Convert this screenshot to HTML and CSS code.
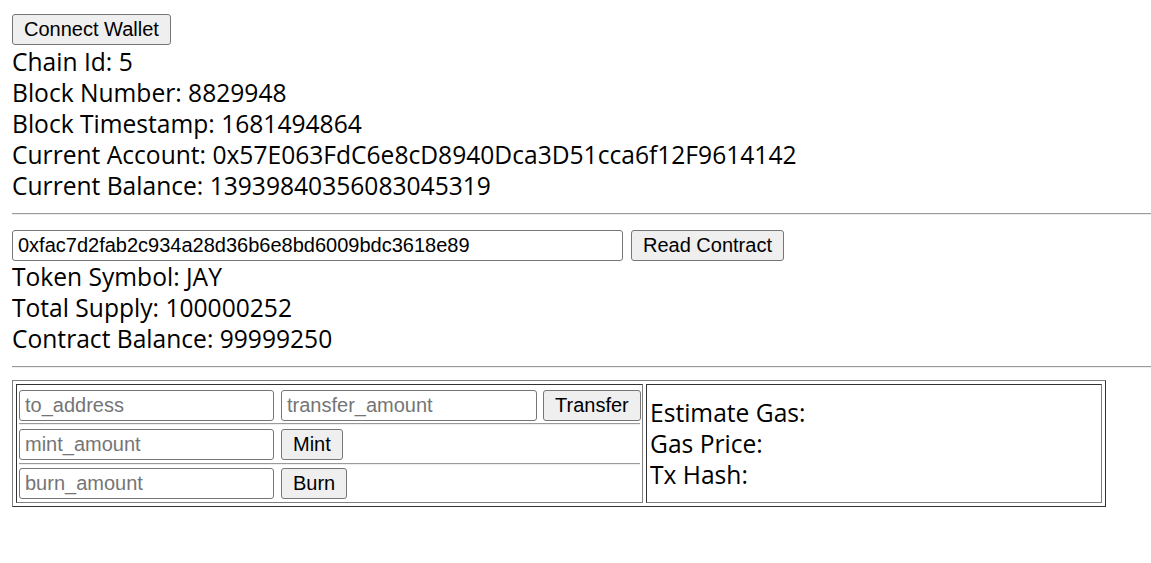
FILE: index.html
```html
<!DOCTYPE html>
<html lang="en">
<head>
<meta charset="utf-8">
<title>Wallet</title>
<link rel="stylesheet" href="styles.css">
</head>
<body>
  <div class="wallet">
    <button class="btn">Connect Wallet</button>
  </div>
  <div class="line">Chain Id: 5</div>
  <div class="line">Block Number: 8829948</div>
  <div class="line">Block Timestamp: 1681494864</div>
  <div class="line">Current Account: 0x57E063FdC6e8cD8940Dca3D51cca6f12F9614142</div>
  <div class="line">Current Balance: 13939840356083045319</div>
  <hr class="rule">
  <div class="contract-row">
    <input class="field field-address" type="text" value="0xfac7d2fab2c934a28d36b6e8bd6009bdc3618e89">
    <button class="btn">Read Contract</button>
  </div>
  <div class="line">Token Symbol: JAY</div>
  <div class="line">Total Supply: 100000252</div>
  <div class="line">Contract Balance: 99999250</div>
  <hr class="rule">
  <table class="actions">
    <tr>
      <td class="cell cell-forms">
        <div class="form-row first">
          <input class="field field-a" type="text" placeholder="to_address">
          <input class="field field-b" type="text" placeholder="transfer_amount">
          <button class="btn">Transfer</button>
        </div>
        <div class="sep"></div>
        <div class="form-row">
          <input class="field field-a" type="text" placeholder="mint_amount">
          <button class="btn">Mint</button>
        </div>
        <div class="sep sep-2"></div>
        <div class="form-row last">
          <input class="field field-a" type="text" placeholder="burn_amount">
          <button class="btn">Burn</button>
        </div>
      </td>
      <td class="cell cell-info">
        <div class="line">Estimate Gas:</div>
        <div class="line">Gas Price:</div>
        <div class="line">Tx Hash:</div>
      </td>
    </tr>
  </table>
</body>
</html>
```

FILE: styles.css
```css
html, body {
  background: #ffffff;
}

body {
  margin: 12px 0 12px 12px;
  font-family: "Open Sans", "Noto Sans", sans-serif;
  font-size: 24.6px;
  color: #000000;
}

.wallet {
  padding-top: 2px;
  height: 32px;
  display: flex;
  align-items: flex-start;
}

.line {
  line-height: 31px;
  height: 31px;
  white-space: nowrap;
}

.btn {
  font-family: "Liberation Sans", Arial, sans-serif;
  font-size: 20px;
  height: 31px;
  padding: 0 11px;
  margin: 0;
  background: #efefef;
  color: #000000;
  border: 1px solid #767676;
  border-radius: 3px;
  line-height: 29px;
}

.rule {
  margin: 12px 0;
  border: none;
  border-top: 1px solid #9a9a9a;
  border-bottom: 1px solid #eeeeee;
  height: 0;
}

.contract-row {
  display: flex;
  gap: 8px;
  padding-top: 3px;
  height: 31px;
}

.field {
  font-family: "Liberation Sans", Arial, sans-serif;
  font-size: 20px;
  height: 31px;
  box-sizing: border-box;
  margin: 0;
  padding: 0 5px;
  border: 1px solid #767676;
  border-radius: 3px;
  color: #000000;
  background: #ffffff;
}

.field::placeholder {
  color: #757575;
}

.field-address {
  width: 611px;
}

.actions {
  table-layout: fixed;
  border: 1px solid;
  border-color: #808080 #333333 #333333 #808080;
  border-spacing: 3px;
  width: 1094px;
}

.cell {
  border: 1px solid;
  border-color: #333333 #808080 #808080 #333333;
  padding: 2px 2px 3px;
  vertical-align: middle;
}

.cell-forms {
  width: 621px;
}

.form-row {
  display: flex;
  margin-top: 4px;
}

.form-row.first {
  margin-top: 3px;
}

.form-row.last {
  margin-top: 3px;
}

.field-a {
  width: 255px;
  margin-right: 7px;
}

.field-b {
  width: 256px;
  margin-right: 6px;
}

.sep {
  margin-top: 2px;
  border-top: 1px solid #9a9a9a;
  border-bottom: 1px solid #eeeeee;
}

.sep-2 {
  margin-top: 3px;
}

.cell-info {
  padding-left: 3px;
}
```
